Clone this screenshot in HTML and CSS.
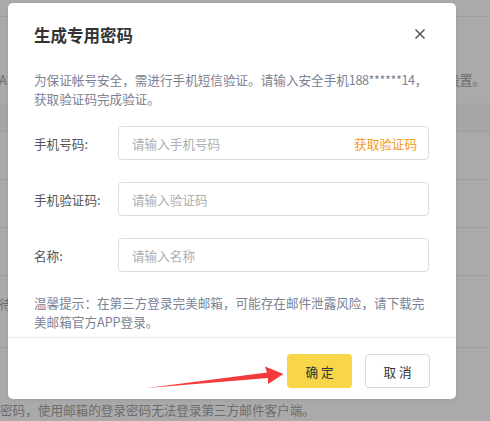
FILE: index.html
```html
<!DOCTYPE html>
<html lang="zh-CN">
<head>
<meta charset="utf-8">
<title>生成专用密码</title>
<link rel="stylesheet" href="styles.css">
</head>
<body>
<div class="page">
  <div class="bg-row r0"></div>
  <div class="bg-row r1"><span class="bg-left">APP</span><span class="bg-right">设置。</span></div>
  <div class="bg-row r2"></div>
  <div class="bg-row r3"></div>
  <div class="bg-row r3"></div>
  <div class="bg-row r3"></div>
  <div class="bg-row r4"><span class="bg-left">待</span></div>
  <div class="bg-row r5"><span class="bg-left wide">密码，使用邮箱的登录密码无法登录第三方邮件客户端。</span></div>
</div>

<div class="modal">
  <div class="modal-header">
    <h2 class="modal-title">生成专用密码</h2>
    <svg class="close" width="12" height="12" viewBox="0 0 12 12"><path d="M1.5 1.5 L10.5 10.5 M10.5 1.5 L1.5 10.5" stroke="#555" stroke-width="1.5" fill="none"/></svg>
  </div>
  <div class="modal-body">
    <p class="desc">为保证帐号安全，需进行手机短信验证。请输入安全手机<span class="num">188******14</span>，<br>获取验证码完成验证。</p>
    <div class="form">
      <div class="form-row">
        <label class="label">手机号码:</label>
        <div class="input"><span class="ph">请输入手机号码</span><span class="getcode">获取验证码</span></div>
      </div>
      <div class="form-row">
        <label class="label">手机验证码:</label>
        <div class="input"><span class="ph">请输入验证码</span></div>
      </div>
      <div class="form-row">
        <label class="label">名称:</label>
        <div class="input"><span class="ph">请输入名称</span></div>
      </div>
    </div>
    <p class="tip">温馨提示：在第三方登录完美邮箱，可能存在邮件泄露风险，请下载完<br>美邮箱官方APP登录。</p>
  </div>
  <div class="modal-footer">
    <button class="btn btn-primary">确 定</button>
    <button class="btn btn-default">取 消</button>
  </div>
</div>

<svg class="arrow" width="490" height="421" viewBox="0 0 490 421">
  <polygon points="147,388 267,372.5 265,366.5 283.5,374 268,384 268,378" fill="#f23a3a"/>
</svg>
</body>
</html>
```

FILE: styles.css
```css
* { box-sizing: border-box; }
html, body { margin: 0; padding: 0; }
body {
  width: 490px;
  height: 421px;
  overflow: hidden;
  background: #aaaaaa;
  font-family: "Noto Sans CJK SC", "Noto Sans", sans-serif;
  position: relative;
}
.page { display: flex; flex-direction: column; }
.bg-row {
  border-bottom: 1px solid #9f9f9f;
  display: flex;
  justify-content: space-between;
  align-items: flex-end;
  color: #6c6c6c;
  font-size: 12.6px;
  white-space: nowrap;
}
.r0 { height: 17px; }
.r1 { height: 86px; padding-bottom: 14px; border-bottom: none; }
.r2 { height: 29px; background: #a6a6a6; }
.r3 { height: 48px; }
.r4 { height: 72px; padding-bottom: 34px; }
.r5 { height: 74px; border-bottom: none; padding-bottom: 3px; }
.bg-left { margin-left: -1px; }
.bg-left.wide { margin-left: 0; }
.bg-right { margin-right: 5px; }

.modal {
  position: absolute;
  left: 8px;
  top: 3px;
  width: 448px;
  height: 396px;
  background: #fff;
  border-radius: 5px;
  display: flex;
  flex-direction: column;
  box-shadow: 0 1px 4px rgba(0,0,0,0.08);
}
.modal-header {
  display: flex;
  justify-content: space-between;
  align-items: center;
  padding: 20px 30px 0 26px;
  height: 44px;
}
.modal-title {
  margin: 0;
  font-size: 16.5px;
  font-weight: 700;
  color: #333;
  line-height: 24px;
}
.close { margin-top: -2px; }
.modal-body {
  padding: 24px 26px 0 26px;
  flex: 1;
}
.desc, .tip {
  margin: 0;
  font-size: 12.6px;
  line-height: 18.5px;
  color: #7b8294;
  white-space: nowrap;
}
.num { letter-spacing: -0.4px; }
.form {
  display: flex;
  flex-direction: column;
  gap: 22px;
  margin-top: 18px;
}
.form-row {
  display: flex;
  align-items: center;
}
.label {
  width: 84px;
  font-size: 12.6px;
  color: #555;
}
.input {
  width: 311px;
  height: 34px;
  border: 1px solid #dcdcdc;
  border-radius: 4px;
  display: flex;
  justify-content: space-between;
  align-items: center;
  padding: 0 11px 0 13px;
  font-size: 12.6px;
}
.ph { color: #aeaeae; }
.getcode { color: #f39a1e; }
.tip { margin-top: 22px; }
.modal-footer {
  border-top: 1px solid #ececec;
  display: flex;
  justify-content: flex-end;
  gap: 13px;
  padding: 16px 26px 11px 0;
}
.btn {
  width: 65px;
  height: 34px;
  border-radius: 4px;
  font-family: inherit;
  font-size: 12.6px;
  color: #333;
  padding: 0;
}
.btn-primary {
  background: #f7d649;
  border: none;
}
.btn-default {
  background: #fff;
  border: 1px solid #d9d9d9;
}
.arrow {
  position: absolute;
  left: 0;
  top: 0;
  pointer-events: none;
}
```
